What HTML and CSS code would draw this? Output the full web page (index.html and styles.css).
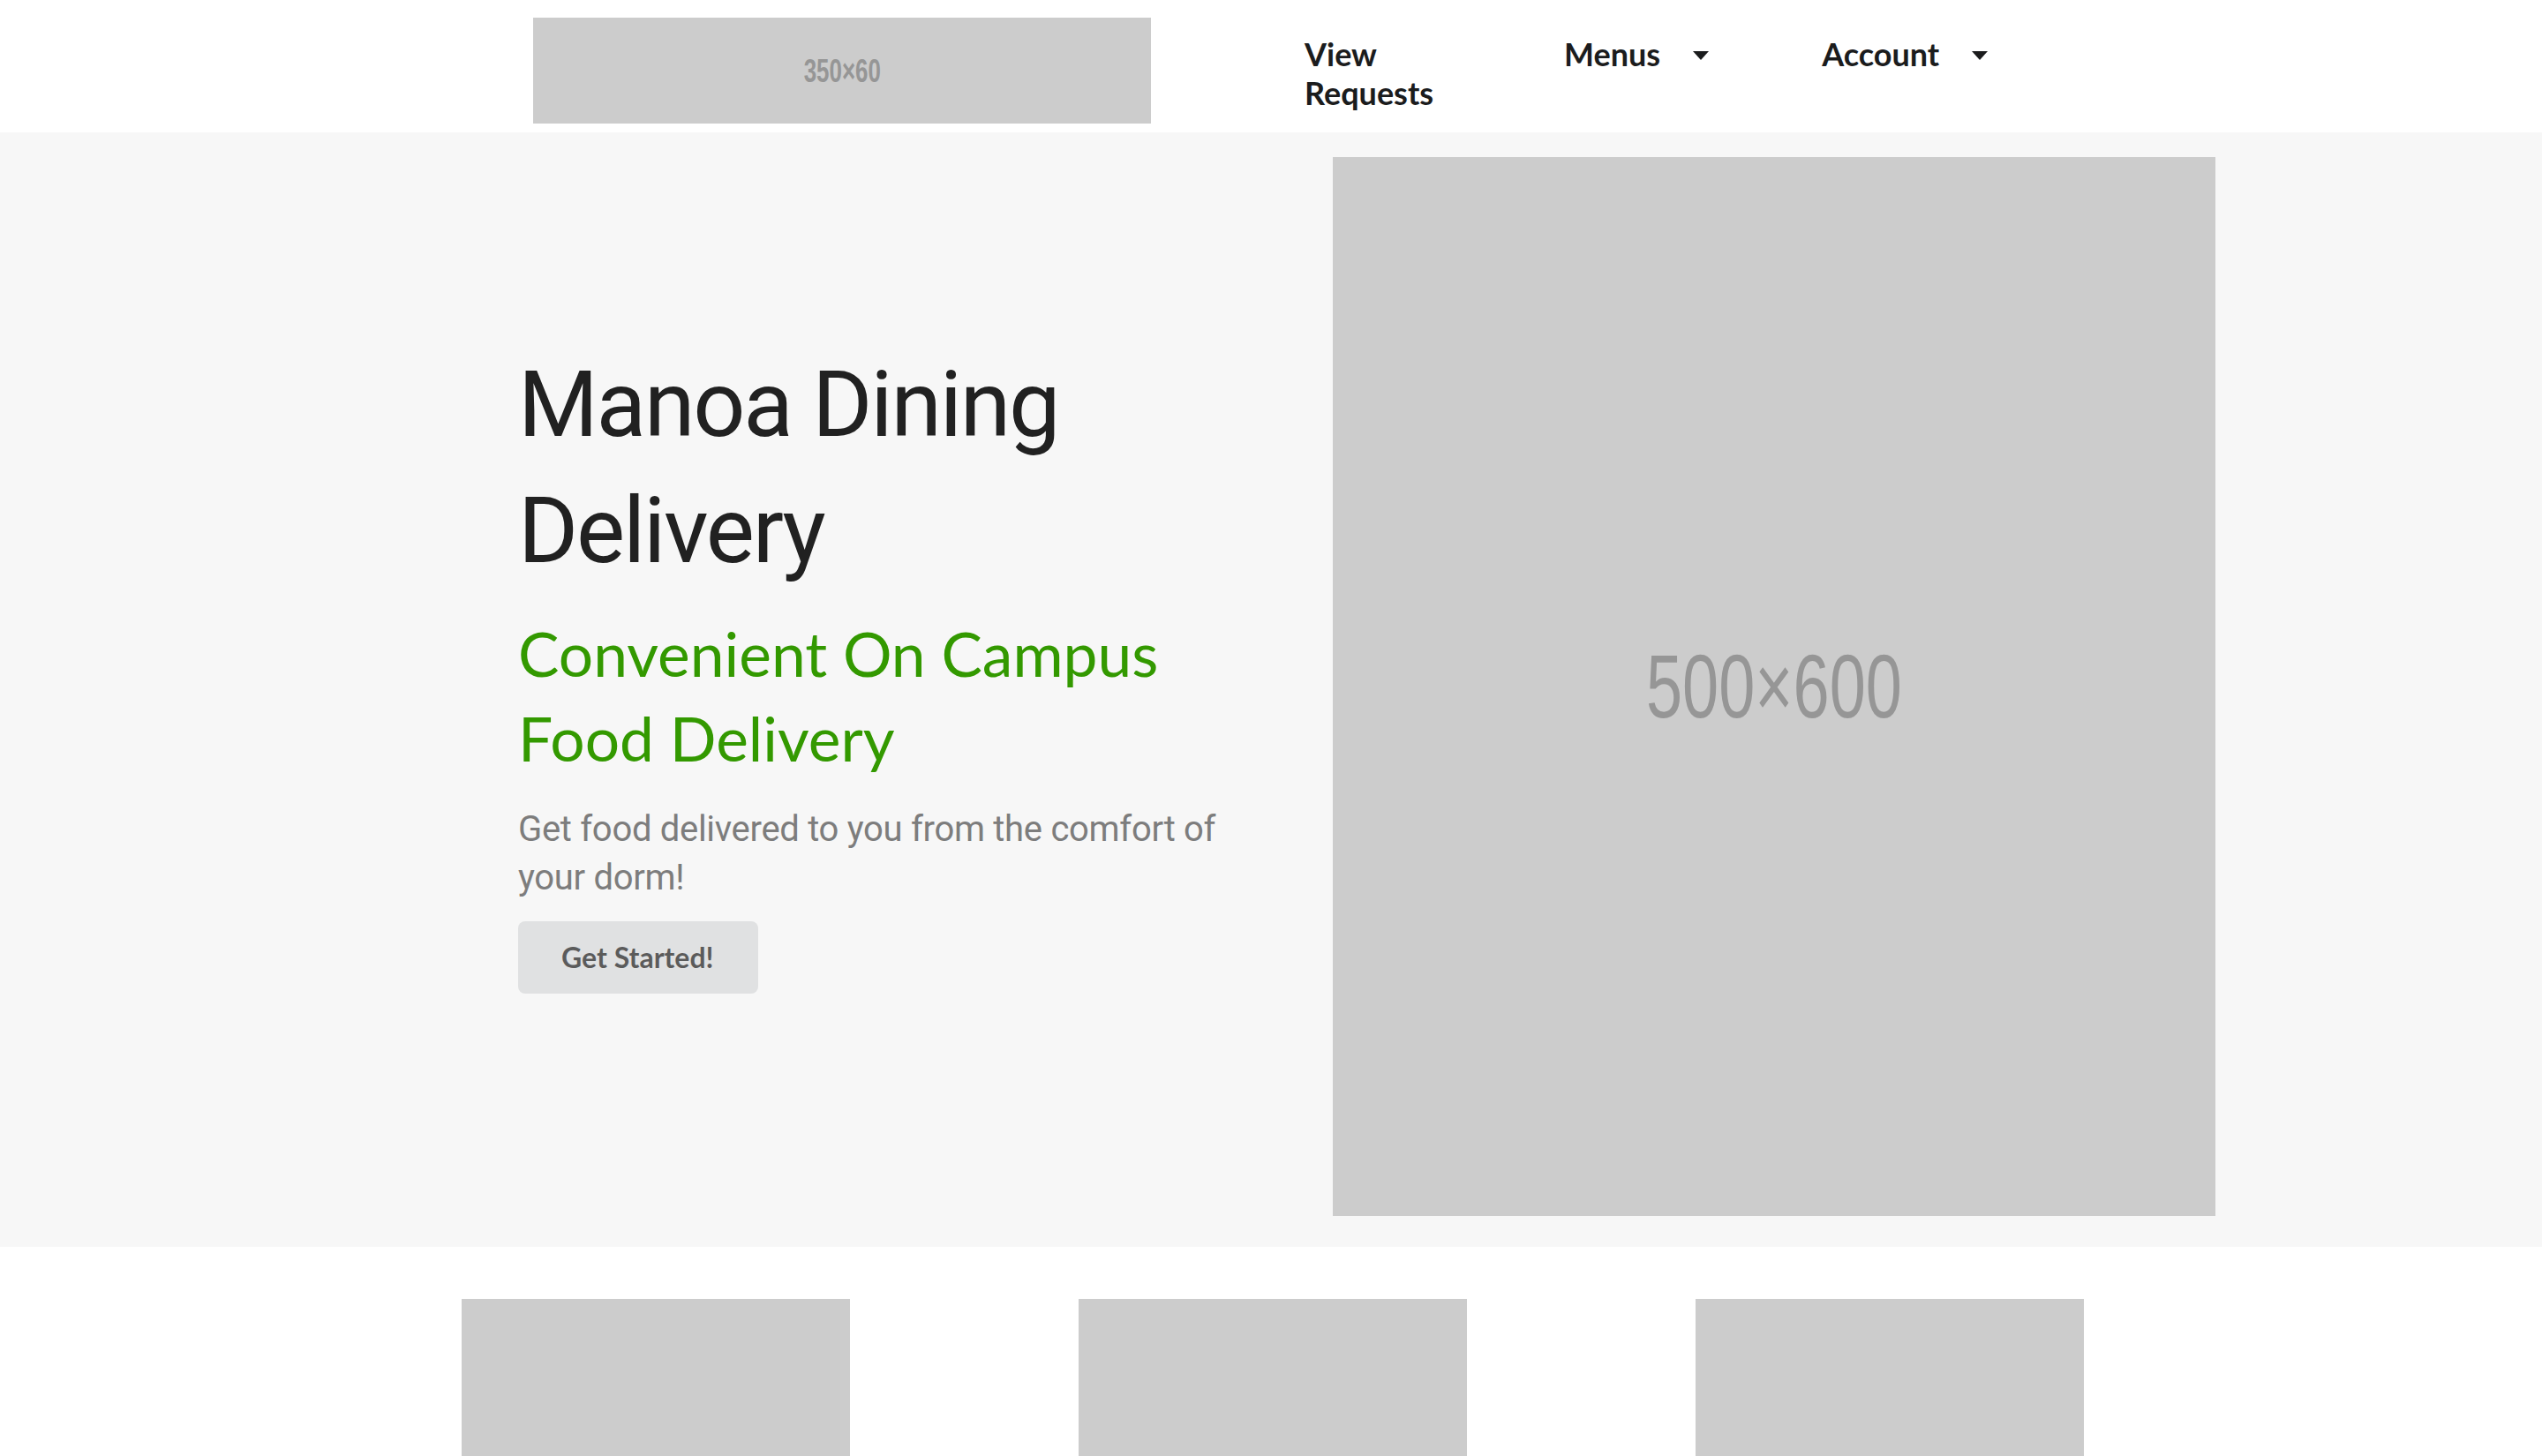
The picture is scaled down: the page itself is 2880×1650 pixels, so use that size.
FILE: index.html
```html
<!DOCTYPE html>
<html lang="en">
<head>
<meta charset="utf-8">
<title>Manoa Dining Delivery</title>
<link rel="stylesheet" href="styles.css">
</head>
<body>
<header class="topbar">
  <div class="logo placeholder"><span class="ph-text ph-small">350×60</span></div>
  <nav class="nav">
    <a class="nav-item nav-wrap" href="#">View Requests</a>
    <a class="nav-item" href="#">Menus <i class="caret"></i></a>
    <a class="nav-item" href="#">Account <i class="caret"></i></a>
  </nav>
</header>

<section class="hero">
  <div class="hero-text">
    <h1 class="hero-title">Manoa Dining Delivery</h1>
    <h2 class="hero-sub">Convenient On Campus Food Delivery</h2>
    <p class="hero-body">Get food delivered to you from the comfort of your dorm!</p>
    <button class="btn">Get Started!</button>
  </div>
  <div class="hero-image placeholder"><span class="ph-text ph-large">500×600</span></div>
</section>

<section class="cards">
  <div class="card placeholder"></div>
  <div class="card placeholder"></div>
  <div class="card placeholder"></div>
</section>
</body>
</html>
```

FILE: styles.css
```css
* { box-sizing: border-box; }

html, body {
  margin: 0;
  padding: 0;
  background: #ffffff;
  font-family: Lato, "Liberation Sans", sans-serif;
}

.placeholder {
  background: #cccccc;
  display: flex;
  align-items: center;
  justify-content: center;
  overflow: hidden;
}

.ph-text {
  display: inline-block;
  font-family: "Liberation Sans", sans-serif;
  color: #969696;
  line-height: 1;
  white-space: nowrap;
}

.ph-small {
  font-size: 37px;
  font-weight: 700;
  transform: scaleX(0.7);
}

.ph-large {
  font-size: 102px;
  transform: scaleX(0.725);
}

/* header */
.topbar {
  height: 150px;
  display: flex;
  align-items: flex-start;
  padding: 20px 0 0 604px;
}

.logo {
  width: 700px;
  height: 120px;
  flex: none;
}

.nav {
  display: flex;
  align-items: flex-start;
  gap: 128px;
  margin-left: 174px;
  padding-top: 19px;
}

.nav-item {
  display: inline-flex;
  align-items: flex-start;
  font-family: Lato, sans-serif;
  font-weight: 700;
  font-size: 36px;
  line-height: 44px;
  color: #1b1c1d;
  text-decoration: none;
  white-space: nowrap;
}

.nav-wrap {
  width: 166px;
  white-space: normal;
}

.caret {
  display: block;
  width: 0;
  height: 0;
  margin-left: 37px;
  margin-top: 19px;
  border-left: 9.5px solid transparent;
  border-right: 9.5px solid transparent;
  border-top: 10px solid #1b1c1d;
}

/* hero */
.hero {
  background: #f7f7f7;
  display: flex;
  padding: 28px 0 35px 587px;
}

.hero-text {
  width: 923px;
  flex: none;
  padding-top: 209px;
  display: flex;
  flex-direction: column;
  align-items: flex-start;
}

.hero-title {
  margin: 0;
  max-width: 820px;
  font-family: Roboto, sans-serif;
  font-weight: 400;
  font-size: 104px;
  line-height: 143px;
  letter-spacing: -2.2px;
  color: #212121;
}

.hero-sub {
  margin: 19px 0 0;
  max-width: 820px;
  font-family: Lato, sans-serif;
  font-weight: 400;
  font-size: 69.5px;
  line-height: 96px;
  color: #339900;
}

.hero-body {
  margin: 28px 0 0;
  max-width: 820px;
  font-family: Roboto, sans-serif;
  font-size: 40px;
  line-height: 55px;
  letter-spacing: -0.3px;
  color: #7d7d7d;
}

.btn {
  margin-top: 22px;
  border: 0;
  border-radius: 8px;
  background: #e0e1e2;
  color: rgba(0, 0, 0, 0.6);
  font-family: Lato, sans-serif;
  font-weight: 700;
  font-size: 32px;
  line-height: 32px;
  padding: 25px 50px 25px 49px;
  cursor: pointer;
}

.hero-image {
  width: 1000px;
  height: 1200px;
  flex: none;
}

/* cards */
.cards {
  display: flex;
  justify-content: center;
  gap: 259px;
  padding: 59px 0 0 4px;
}

.card {
  width: 440px;
  height: 440px;
  flex: none;
}
```
